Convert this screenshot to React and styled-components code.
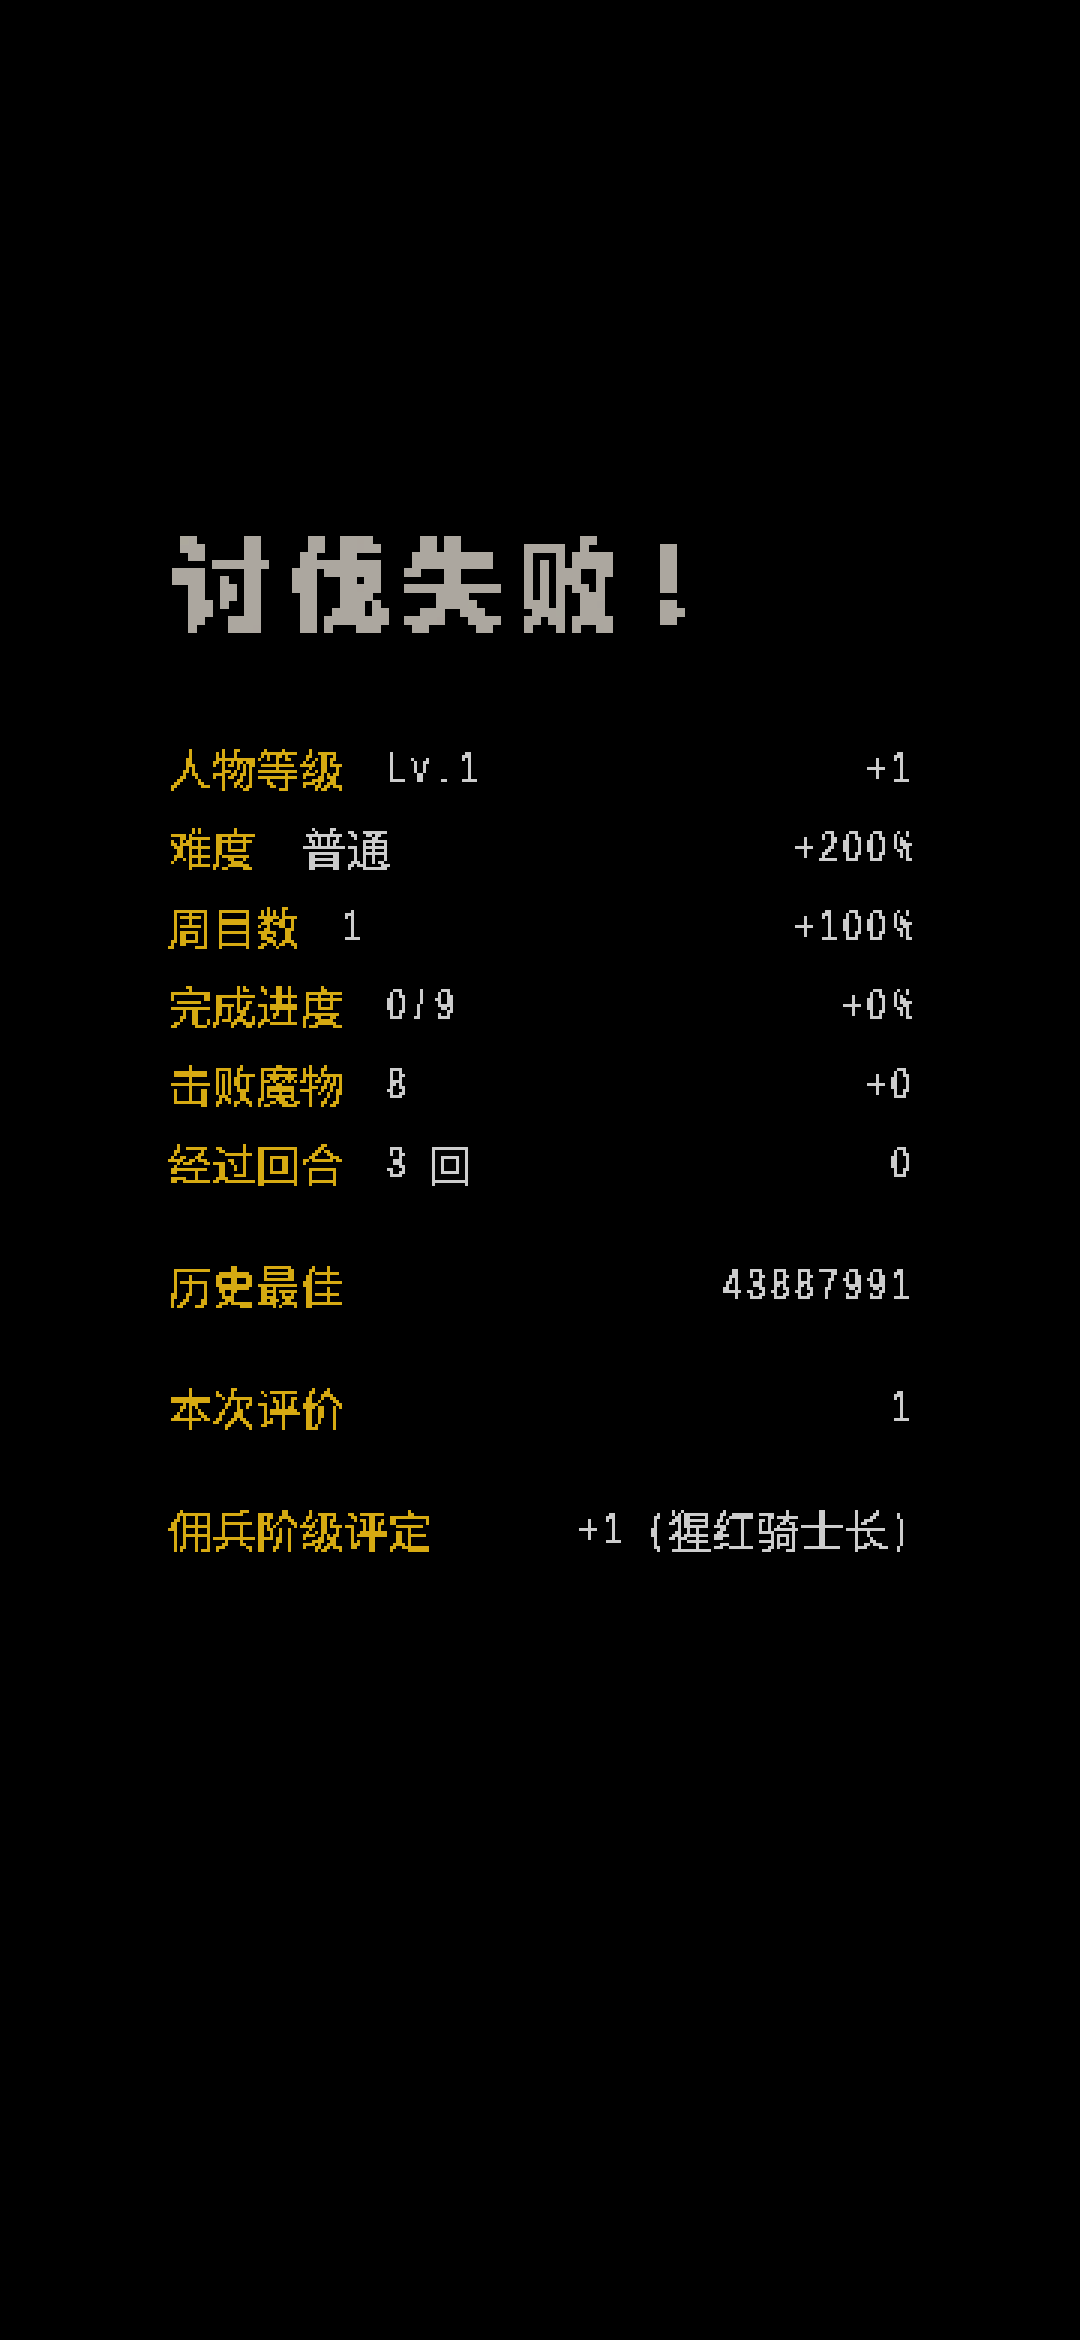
import React from "react";
import styled, { createGlobalStyle } from "styled-components";

const CJK = '"Noto Sans CJK SC", "Noto Sans", sans-serif';
const GOLD = "#d6aa12";
const GREY = "#cccccc";

const GlobalStyle = createGlobalStyle`
  html, body {
    margin: 0;
    padding: 0;
    background: #000;
  }
  #root {
    min-height: 2340px;
  }
`;

const Screen = styled.main`
  box-sizing: border-box;
  height: 2340px;
  padding: 520px 168px 0;
  background: #000;
  font-family: ${CJK};
`;

const Defs = styled.svg`
  position: absolute;
  width: 0;
  height: 0;
`;

const Title = styled.h1`
  margin: 0 0 80px 4px;
  height: 128px;
  font-size: 102px;
  line-height: 120px;
  font-weight: 900;
  letter-spacing: 13px;
  white-space: nowrap;
  color: #aca79f;
  filter: url(#pixel-title);
`;

const Bang = styled.span`
  margin-left: 18px;
`;

const Section = styled.section`
  margin-bottom: 43px;
`;

const Row = styled.div`
  display: flex;
  justify-content: space-between;
  align-items: center;
  height: 79px;
  font-size: 44px;
  line-height: 52px;
  font-weight: 400;
  white-space: nowrap;
  filter: url(#pixel-text);
`;

const Left = styled.div`
  display: flex;
  align-items: center;
  gap: 46px;
`;

const Label = styled.span`
  color: ${GOLD};
`;

const Value = styled.span`
  display: inline-flex;
  align-items: center;
  color: ${GREY};
`;

const Detail = styled.span`
  display: inline-flex;
  align-items: center;
  margin-left: ${(props) => (props.$latin ? -6 : 0)}px;
`;

// every latin character keeps its own narrow, fixed-width cell
const Cell = styled.span`
  display: inline-block;
  width: ${(props) => (props.$gap ? 20 : 24)}px;
  font-family: "Liberation Sans", sans-serif;
  font-size: 44px;
  line-height: 52px;
  text-align: center;
  white-space: pre;
  transform: scaleX(${(props) => (props.$wide ? 0.5 : 0.76)});
`;

const Latin = ({ children }) =>
  [...children].map((char, index) => (
    <Cell key={index} $wide={char === "%"} $gap={char === " "}>
      {char}
    </Cell>
  ));

const stats = [
  { label: "人物等级", detail: <Latin>Lv.1</Latin>, latin: true, score: "+1" },
  { label: "难度", detail: "普通", score: "+200%" },
  { label: "周目数", detail: <Latin>1</Latin>, latin: true, score: "+100%" },
  { label: "完成进度", detail: <Latin>0/9</Latin>, latin: true, score: "+0%" },
  { label: "击败魔物", detail: <Latin>8</Latin>, latin: true, score: "+0" },
  {
    label: "经过回合",
    detail: (
      <>
        <Latin>3 </Latin>回
      </>
    ),
    latin: true,
    score: "0",
  },
];

// samples one point per cell, hardens it and spreads it over the cell
function PixelFilter({ id, cell }) {
  const radius = Math.floor(cell / 2);
  return (
    <filter id={id} x="0" y="0" width="100%" height="100%" colorInterpolationFilters="sRGB">
      <feFlood x={radius} y={radius} width="1" height="1" />
      <feComposite width={cell} height={cell} />
      <feTile result="grid" />
      <feComposite in="SourceGraphic" in2="grid" operator="in" />
      <feComponentTransfer>
        <feFuncA type="discrete" tableValues="0 1 1 1" />
      </feComponentTransfer>
      <feMorphology operator="dilate" radius={radius} />
    </filter>
  );
}

export default function App() {
  return (
    <>
      <GlobalStyle />
      <Defs aria-hidden="true">
        <PixelFilter id="pixel-title" cell={8} />
        <PixelFilter id="pixel-text" cell={3} />
      </Defs>
      <Screen>
        <Title>
          讨伐失败<Bang>!</Bang>
        </Title>
        <Section>
          {stats.map((stat) => (
            <Row key={stat.label}>
              <Left>
                <Label>{stat.label}</Label>
                <Value>
                  <Detail $latin={stat.latin}>{stat.detail}</Detail>
                </Value>
              </Left>
              <Value>
                <Latin>{stat.score}</Latin>
              </Value>
            </Row>
          ))}
        </Section>
        <Section>
          <Row>
            <Label>历史最佳</Label>
            <Value>
              <Latin>43887991</Latin>
            </Value>
          </Row>
        </Section>
        <Section>
          <Row>
            <Label>本次评价</Label>
            <Value>
              <Latin>1</Latin>
            </Value>
          </Row>
        </Section>
        <Section>
          <Row>
            <Label>佣兵阶级评定</Label>
            <Value>
              <Latin>+1 (</Latin>猩红骑士长<Latin>)</Latin>
            </Value>
          </Row>
        </Section>
      </Screen>
    </>
  );
}
